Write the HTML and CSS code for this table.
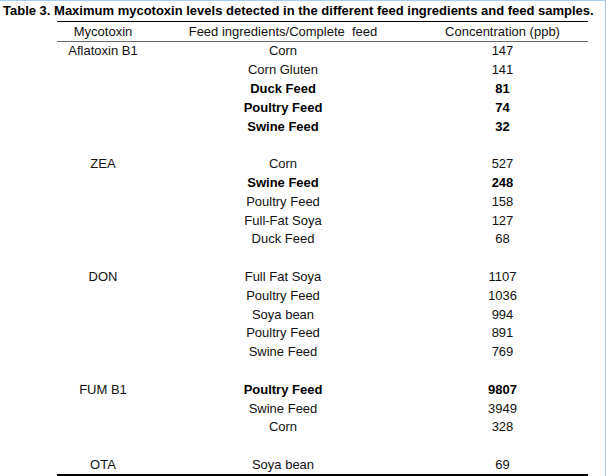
FILE: index.html
```html
<!DOCTYPE html>
<html>
<head>
<meta charset="utf-8">
<link rel="stylesheet" href="styles.css">
</head>
<body>
<div class="page">
  <div class="title">Table 3. Maximum mycotoxin levels detected in the different feed ingredients and feed samples.</div>
  <table class="tbl">
    <thead>
      <tr><th class="c1">Mycotoxin</th><th class="c2">Feed ingredients/Complete&nbsp; feed</th><th class="c3">Concentration (ppb)</th></tr>
    </thead>
    <tbody>
      <tr><td>Aflatoxin B1</td><td>Corn</td><td>147</td></tr>
      <tr><td></td><td>Corn Gluten</td><td>141</td></tr>
      <tr class="b"><td></td><td>Duck Feed</td><td>81</td></tr>
      <tr class="b"><td></td><td>Poultry Feed</td><td>74</td></tr>
      <tr class="b"><td></td><td>Swine Feed</td><td>32</td></tr>
      <tr class="gap"><td></td><td></td><td></td></tr>
      <tr><td>ZEA</td><td>Corn</td><td>527</td></tr>
      <tr class="b"><td></td><td>Swine Feed</td><td>248</td></tr>
      <tr><td></td><td>Poultry Feed</td><td>158</td></tr>
      <tr><td></td><td>Full-Fat Soya</td><td>127</td></tr>
      <tr><td></td><td>Duck Feed</td><td>68</td></tr>
      <tr class="gap"><td></td><td></td><td></td></tr>
      <tr><td>DON</td><td>Full Fat Soya</td><td>1107</td></tr>
      <tr><td></td><td>Poultry Feed</td><td>1036</td></tr>
      <tr><td></td><td>Soya bean</td><td>994</td></tr>
      <tr><td></td><td>Poultry Feed</td><td>891</td></tr>
      <tr><td></td><td>Swine Feed</td><td>769</td></tr>
      <tr class="gap"><td></td><td></td><td></td></tr>
      <tr><td>FUM B1</td><td class="bb">Poultry Feed</td><td class="bb">9807</td></tr>
      <tr><td></td><td>Swine Feed</td><td>3949</td></tr>
      <tr><td></td><td>Corn</td><td>328</td></tr>
      <tr class="gap"><td></td><td></td><td></td></tr>
      <tr class="last"><td>OTA</td><td>Soya bean</td><td>69</td></tr>
    </tbody>
  </table>
</div>
</body>
</html>
```

FILE: styles.css
```css
html, body {
  margin: 0;
  padding: 0;
  background: #ffffff;
}
.page {
  width: 605px;
  height: 475px;
  border-top: 1px solid #a9cdef;
  border-right: 1px solid #a9cdef;
  font-family: "Liberation Sans", Arial, sans-serif;
  color: #111;
}
.title {
  font-weight: bold;
  font-size: 13px;
  line-height: 19px;
  margin-bottom: 1px;
  padding-left: 3px;
  white-space: nowrap;
  color: #000;
}
.tbl {
  margin-left: 57px;
  width: 531px;
  border-collapse: collapse;
  table-layout: fixed;
  font-size: 13px;
}
.tbl th {
  font-weight: normal;
  height: 19px;
  padding: 0;
  line-height: 18px;
  border-top: 1.5px solid #000;
  border-bottom: 1px solid #666;
  white-space: nowrap;
}
.c1 { width: 92px; }
.c2 { width: 268px; }
.c3 { width: 171px; }
.tbl td {
  padding: 0;
  height: 18.8px;
  line-height: 18px;
  text-align: center;
  white-space: nowrap;
}
.tbl tr.b td, .tbl td.bb {
  font-weight: bold;
  color: #000;
}
.tbl tr.last td {
  height: 18px;
  border-bottom: 2px solid #000;
}
```
